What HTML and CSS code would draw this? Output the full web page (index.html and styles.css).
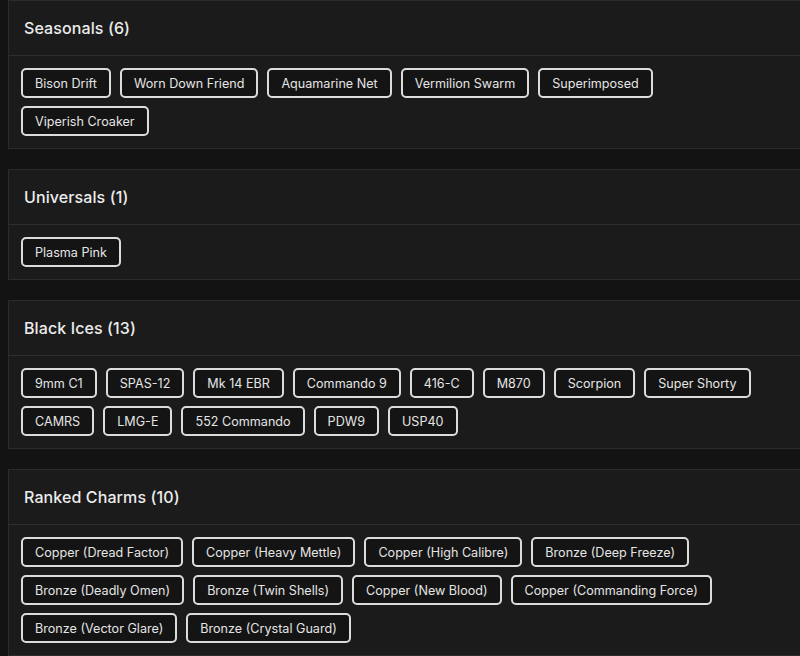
FILE: index.html
```html
<!DOCTYPE html>
<html>
<head>
<meta charset="utf-8">
<link rel="stylesheet" href="styles.css">
</head>
<body>
<main class="page">
  <section class="card">
    <h2 class="card-title">Seasonals (6)</h2>
    <div class="chips">
      <span class="chip">Bison Drift</span>
      <span class="chip">Worn Down Friend</span>
      <span class="chip">Aquamarine Net</span>
      <span class="chip">Vermilion Swarm</span>
      <span class="chip">Superimposed</span>
      <span class="chip">Viperish Croaker</span>
    </div>
  </section>
  <section class="card">
    <h2 class="card-title">Universals (1)</h2>
    <div class="chips">
      <span class="chip">Plasma Pink</span>
    </div>
  </section>
  <section class="card">
    <h2 class="card-title">Black Ices (13)</h2>
    <div class="chips">
      <span class="chip">9mm C1</span>
      <span class="chip">SPAS-12</span>
      <span class="chip">Mk 14 EBR</span>
      <span class="chip">Commando 9</span>
      <span class="chip">416-C</span>
      <span class="chip">M870</span>
      <span class="chip">Scorpion</span>
      <span class="chip">Super Shorty</span>
      <span class="chip">CAMRS</span>
      <span class="chip">LMG-E</span>
      <span class="chip">552 Commando</span>
      <span class="chip">PDW9</span>
      <span class="chip">USP40</span>
    </div>
  </section>
  <section class="card">
    <h2 class="card-title">Ranked Charms (10)</h2>
    <div class="chips">
      <span class="chip">Copper (Dread Factor)</span>
      <span class="chip">Copper (Heavy Mettle)</span>
      <span class="chip">Copper (High Calibre)</span>
      <span class="chip">Bronze (Deep Freeze)</span>
      <span class="chip">Bronze (Deadly Omen)</span>
      <span class="chip">Bronze (Twin Shells)</span>
      <span class="chip">Copper (New Blood)</span>
      <span class="chip">Copper (Commanding Force)</span>
      <span class="chip">Bronze (Vector Glare)</span>
      <span class="chip">Bronze (Crystal Guard)</span>
    </div>
  </section>
</main>
</body>
</html>
```
FILE: styles.css
```css
html, body {
  margin: 0;
  padding: 0;
  background: #131313;
  overflow: hidden;
}
body {
  font-family: Inter, "Open Sans", sans-serif;
  color: #e6e6e6;
}
.page {
  padding-left: 8px;
  display: flex;
  flex-direction: column;
  gap: 20px;
  width: 830px;
}
.card {
  background: #1b1b1b;
  border: 1px solid #2b2b2b;
}
.card-title {
  margin: 0;
  height: 54px;
  display: flex;
  align-items: center;
  padding: 0 15px;
  font-size: 16px;
  font-weight: 500;
  color: #ececec;
  border-bottom: 1px solid #2d2d2d;
  letter-spacing: 0.1px;
}
.chips {
  display: flex;
  flex-wrap: wrap;
  gap: 8px 9px;
  padding: 12px;
  width: 760px;
}
.chip {
  height: 30px;
  box-sizing: border-box;
  display: inline-flex;
  align-items: center;
  padding: 0 12px;
  border: 2px solid #dcdcdc;
  border-radius: 5px;
  background: #141414;
  font-size: 12.6px;
  color: #e4e4e4;
  white-space: nowrap;
}
```
